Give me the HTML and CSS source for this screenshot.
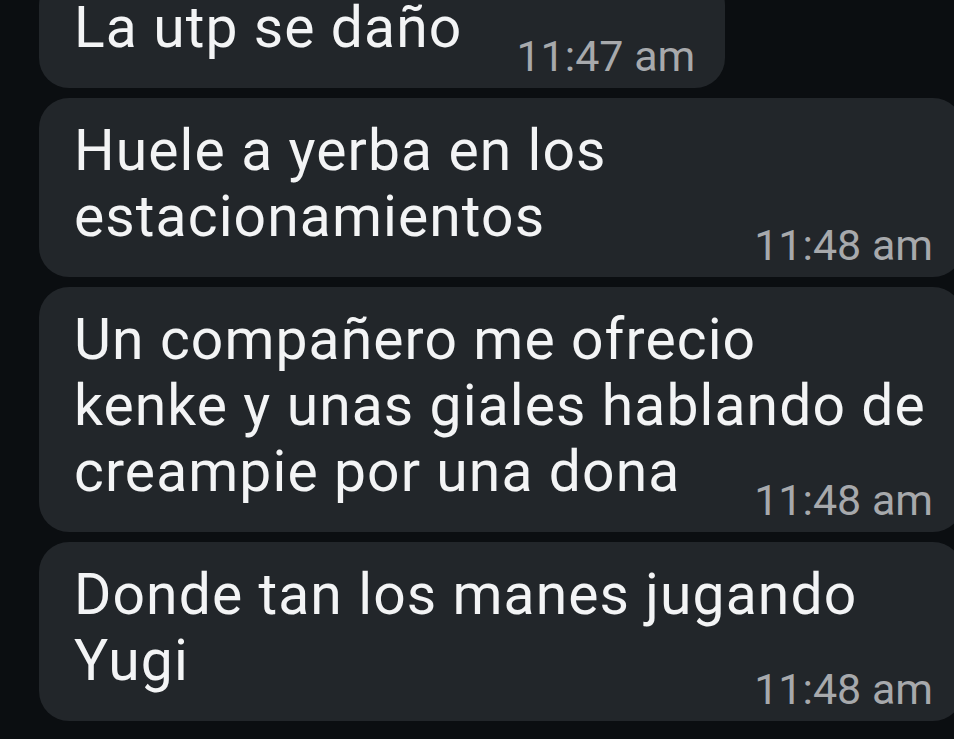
FILE: index.html
```html
<!DOCTYPE html>
<html lang="es">
<head>
    <meta charset="UTF-8">
    <title>Chat</title>
    <link rel="stylesheet" href="styles.css">
</head>
<body>
    <div class="chat">
        <div class="bubble first">
            <p class="msg">La utp se daño<span class="time">11:47 am</span></p>
        </div>
        <div class="bubble">
            <p class="msg">Huele a yerba en los estacionamientos<span class="time">11:48 am</span></p>
        </div>
        <div class="bubble">
            <p class="msg">Un compañero me ofrecio<br>kenke y unas giales hablando de creampie por una dona<span class="time">11:48 am</span></p>
        </div>
        <div class="bubble">
            <p class="msg">Donde tan los manes jugando Yugi<span class="time">11:48 am</span></p>
        </div>
    </div>
</body>
</html>
```

FILE: styles.css
```css
html, body {
    margin: 0;
    padding: 0;
    background: #0b0e11;
    overflow: hidden;
    height: 100%;
}
body {
    font-family: Roboto, "Noto Sans", sans-serif;
}
.chat {
    width: 924px;
    margin-left: 39px;
    display: flex;
    flex-direction: column;
    align-items: flex-start;
    gap: 10px;
}
.bubble {
    display: flow-root;
    box-sizing: border-box;
    max-width: 924px;
    background: #22262a;
    border-radius: 30px;
    padding: 20px 30px 9px 35px;
}
.bubble.first {
    margin-top: -25px;
}
.msg {
    margin: 0;
    color: #f3f4f5;
    font-size: 57px;
    line-height: 66px;
    letter-spacing: 1.1px;
}
.time {
    float: right;
    margin: 39px 0 0 54px;
    color: #a7a9ac;
    font-size: 43px;
    line-height: 45px;
    letter-spacing: 0;
}
```
